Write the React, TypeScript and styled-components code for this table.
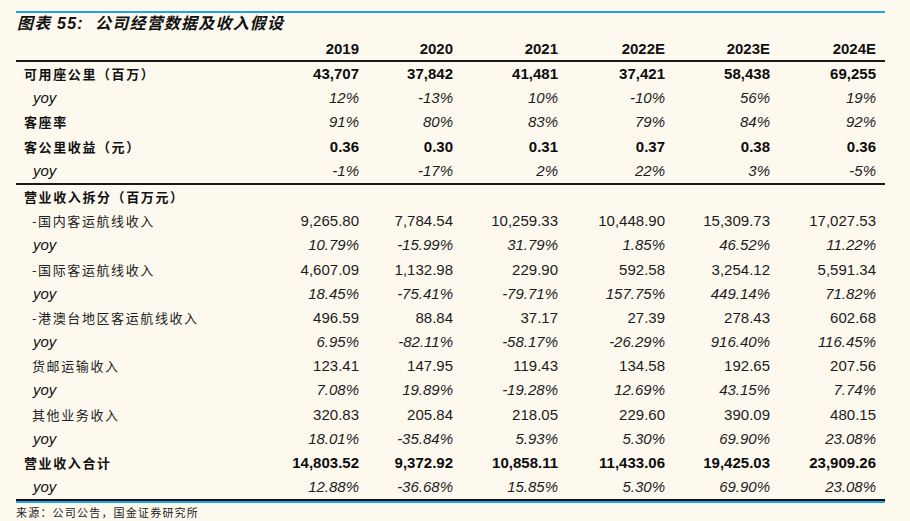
import React from 'react'
import styled, { createGlobalStyle } from 'styled-components'


type RowKind = 'main' | 'sub' | 'yoy' | 'head'


interface RowData {
  label: string
  kind: RowKind
  values?: string[]
  bold?: boolean
  italic?: boolean
  divider?: boolean
}


const years = ['2019', '2020', '2021', '2022E', '2023E', '2024E']


const rows: RowData[] = [
  { label: '可用座公里（百万）', kind: 'main', bold: true, values: ['43,707', '37,842', '41,481', '37,421', '58,438', '69,255'] },
  { label: 'yoy', kind: 'yoy', italic: true, values: ['12%', '-13%', '10%', '-10%', '56%', '19%'] },
  { label: '客座率', kind: 'main', italic: true, values: ['91%', '80%', '83%', '79%', '84%', '92%'] },
  { label: '客公里收益（元）', kind: 'main', bold: true, values: ['0.36', '0.30', '0.31', '0.37', '0.38', '0.36'] },
  { label: 'yoy', kind: 'yoy', italic: true, divider: true, values: ['-1%', '-17%', '2%', '22%', '3%', '-5%'] },
  { label: '营业收入拆分（百万元）', kind: 'head' },
  { label: '-国内客运航线收入', kind: 'sub', values: ['9,265.80', '7,784.54', '10,259.33', '10,448.90', '15,309.73', '17,027.53'] },
  { label: 'yoy', kind: 'yoy', italic: true, values: ['10.79%', '-15.99%', '31.79%', '1.85%', '46.52%', '11.22%'] },
  { label: '-国际客运航线收入', kind: 'sub', values: ['4,607.09', '1,132.98', '229.90', '592.58', '3,254.12', '5,591.34'] },
  { label: 'yoy', kind: 'yoy', italic: true, values: ['18.45%', '-75.41%', '-79.71%', '157.75%', '449.14%', '71.82%'] },
  { label: '-港澳台地区客运航线收入', kind: 'sub', values: ['496.59', '88.84', '37.17', '27.39', '278.43', '602.68'] },
  { label: 'yoy', kind: 'yoy', italic: true, values: ['6.95%', '-82.11%', '-58.17%', '-26.29%', '916.40%', '116.45%'] },
  { label: '货邮运输收入', kind: 'sub', values: ['123.41', '147.95', '119.43', '134.58', '192.65', '207.56'] },
  { label: 'yoy', kind: 'yoy', italic: true, values: ['7.08%', '19.89%', '-19.28%', '12.69%', '43.15%', '7.74%'] },
  { label: '其他业务收入', kind: 'sub', values: ['320.83', '205.84', '218.05', '229.60', '390.09', '480.15'] },
  { label: 'yoy', kind: 'yoy', italic: true, values: ['18.01%', '-35.84%', '5.93%', '5.30%', '69.90%', '23.08%'] },
  { label: '营业收入合计', kind: 'main', bold: true, values: ['14,803.52', '9,372.92', '10,858.11', '11,433.06', '19,425.03', '23,909.26'] },
  { label: 'yoy', kind: 'yoy', italic: true, values: ['12.88%', '-36.68%', '15.85%', '5.30%', '69.90%', '23.08%'] },
]


const GlobalStyle = createGlobalStyle`
  html, body {
    margin: 0;
    padding: 0;
    background: #fdf9ef;
  }
`


const Page = styled.div`
  width: 910px;
  height: 521px;
  padding: 11px 0 0 16px;
  box-sizing: border-box;
  background: #fdf9ef;
  color: #111;
  font-family: 'Liberation Sans', 'Noto Sans CJK SC', sans-serif;
`


const Figure = styled.div`
  width: 869px;
`


const Title = styled.div`
  border-top: 2px solid #22a5e8;
  height: 23px;
  padding-left: 1px;
  line-height: 22px;
  font-size: 16px;
  font-weight: 700;
  font-style: italic;
  letter-spacing: 1.2px;
  white-space: pre;
  font-family: 'Liberation Sans', 'Noto Sans CJK SC', sans-serif;
`


const Grid = styled.div`
  display: grid;
  grid-template-columns: 246px 106px 94px 105px 107px 105px 106px;
`


const HeadCell = styled.div`
  height: 24px;
  line-height: 26px;
  text-align: right;
  padding-right: 9px;
  font-size: 15px;
  font-weight: 700;
  border-bottom: 2px solid #1a1a1a;
`


const Label = styled.div<{ $kind: RowKind; $divider?: boolean }>`
  height: 24.2px;
  line-height: 24px;
  white-space: nowrap;
  padding-left: ${({ $kind }) =>
    $kind === 'yoy' ? '17px' : $kind === 'sub' ? '16px' : '8px'};
  font-family: ${({ $kind }) =>
    $kind === 'yoy'
      ? "'Liberation Sans', sans-serif"
      : "'Noto Sans CJK SC', sans-serif"};
  font-size: ${({ $kind }) => ($kind === 'yoy' ? '15px' : '13px')};
  font-style: ${({ $kind }) => ($kind === 'yoy' ? 'italic' : 'normal')};
  font-weight: ${({ $kind }) => ($kind === 'main' || $kind === 'head' ? 700 : 400)};
  letter-spacing: ${({ $kind }) => ($kind === 'yoy' ? '0' : '1.6px')};
  color: ${({ $kind }) => ($kind === 'sub' ? '#222' : '#111')};
  border-bottom: ${({ $divider }) => ($divider ? '2px solid #1a1a1a' : 'none')};
`


const Value = styled.div<{ $bold?: boolean; $italic?: boolean; $divider?: boolean }>`
  height: 24.2px;
  line-height: 24px;
  text-align: right;
  padding-right: 9px;
  font-size: 15px;
  font-weight: ${({ $bold }) => ($bold ? 700 : 400)};
  font-style: ${({ $italic }) => ($italic ? 'italic' : 'normal')};
  color: ${({ $bold }) => ($bold ? '#0c0c0c' : '#1c1c1c')};
  border-bottom: ${({ $divider }) => ($divider ? '2px solid #1a1a1a' : 'none')};
`


const BottomRule = styled.div`
  border-top: 2px solid #111;
  border-bottom: 2px solid #22a5e8;
`


const Source = styled.div`
  padding-top: 2px;
  font-family: 'Noto Sans CJK SC', sans-serif;
  font-size: 11px;
  letter-spacing: 1.2px;
  line-height: 14px;
  color: #222;
`


export default function App() {
  return (
    <>
      <GlobalStyle />
      <Page>
        <Figure>
          <Title>{'图表 55:  公司经营数据及收入假设'}</Title>
          <Grid>
            <HeadCell />
            {years.map((y) => (
              <HeadCell key={y}>{y}</HeadCell>
            ))}
            {rows.map((r, i) => (
              <React.Fragment key={i}>
                <Label $kind={r.kind} $divider={r.divider}>
                  {r.label}
                </Label>
                {years.map((y, j) => (
                  <Value
                    key={y}
                    $bold={r.bold}
                    $italic={r.italic}
                    $divider={r.divider}
                  >
                    {r.values ? r.values[j] : ''}
                  </Value>
                ))}
              </React.Fragment>
            ))}
          </Grid>
          <BottomRule />
          <Source>来源：公司公告，国金证券研究所</Source>
        </Figure>
      </Page>
    </>
  )
}
